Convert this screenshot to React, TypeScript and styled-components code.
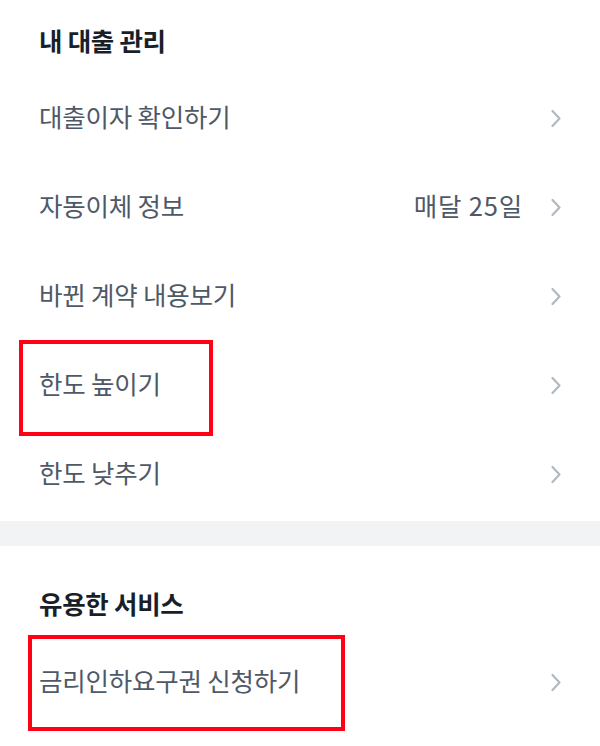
import React from "react";
import styled, { createGlobalStyle } from "styled-components";

const GlobalStyle = createGlobalStyle`
  body {
    margin: 0;
    background: #ffffff;
    font-family: "Noto Sans CJK KR", "Noto Sans", sans-serif;
  }
`;

type rowProp = {
  label: string;
  value?: string;
  mark?: { top: number; left: number; width: number; height: number };
};

const Chevron = () => (
  <svg width="12" height="19" viewBox="0 0 12 19" fill="none">
    <path
      d="M2.5 2L9.5 9.5L2.5 17"
      stroke="#b0b8c1"
      strokeWidth="2.2"
      strokeLinecap="round"
      strokeLinejoin="round"
    />
  </svg>
);

const MenuRow = ({ label, value, mark }: rowProp) => {
  return (
    <Row>
      <Label>{label}</Label>
      <Right>
        {value && <Value>{value}</Value>}
        <Chevron />
      </Right>
      {mark && (
        <Mark
          $top={mark.top}
          $left={mark.left}
          $width={mark.width}
          $height={mark.height}
        />
      )}
    </Row>
  );
};

export default function App() {
  return (
    <>
      <GlobalStyle />
      <Page>
        <Section>
          <Heading>내 대출 관리</Heading>
          <MenuRow label="대출이자 확인하기" />
          <MenuRow label="자동이체 정보" value="매달 25일" />
          <MenuRow label="바뀐 계약 내용보기" />
          <MenuRow
            label="한도 높이기"
            mark={{ top: -1, left: 19, width: 194, height: 96 }}
          />
          <MenuRow label="한도 낮추기" />
        </Section>
        <Divider />
        <Section>
          <Heading $top={40}>유용한 서비스</Heading>
          <MenuRow
            label="금리인하요구권 신청하기"
            mark={{ top: -3, left: 28, width: 317, height: 96 }}
          />
        </Section>
      </Page>
    </>
  );
}

const Page = styled.div`
  width: 600px;
  min-height: 746px;
  background: #ffffff;
  overflow: hidden;
`;
const Section = styled.section`
  display: flex;
  flex-direction: column;
  padding-bottom: 2px;
`;
const Heading = styled.h3<{ $top?: number }>`
  margin: 0;
  padding: ${(p) => p.$top ?? 23}px 39px 0;
  height: ${(p) => (p.$top ? 92 - p.$top : 74 - 23)}px;
  box-sizing: content-box;
  font-size: 25.5px;
  font-weight: 700;
  line-height: 34px;
  color: #191f28;
  letter-spacing: -0.3px;
`;
const Row = styled.div`
  position: relative;
  display: flex;
  align-items: center;
  justify-content: space-between;
  height: 89px;
  box-sizing: border-box;
  padding: 0 39px 6px 39px;
`;
const Label = styled.span`
  font-size: 25.5px;
  line-height: 1;
  color: #4e5968;
  letter-spacing: -0.2px;
`;
const Right = styled.div`
  display: flex;
  align-items: center;
  gap: 27px;
  margin-right: -1px;
  padding-top: 5px;
`;
const Value = styled.span`
  font-size: 25.5px;
  line-height: 1;
  color: #4e5968;
  letter-spacing: 0.8px;
  margin-top: -5px;
`;
const Mark = styled.div<{
  $top: number;
  $left: number;
  $width: number;
  $height: number;
}>`
  position: absolute;
  top: ${(p) => p.$top}px;
  left: ${(p) => p.$left}px;
  width: ${(p) => p.$width}px;
  height: ${(p) => p.$height}px;
  box-sizing: border-box;
  border: 4px solid #ff0015;
  pointer-events: none;
`;
const Divider = styled.div`
  height: 25px;
  background: #f2f3f5;
`;
